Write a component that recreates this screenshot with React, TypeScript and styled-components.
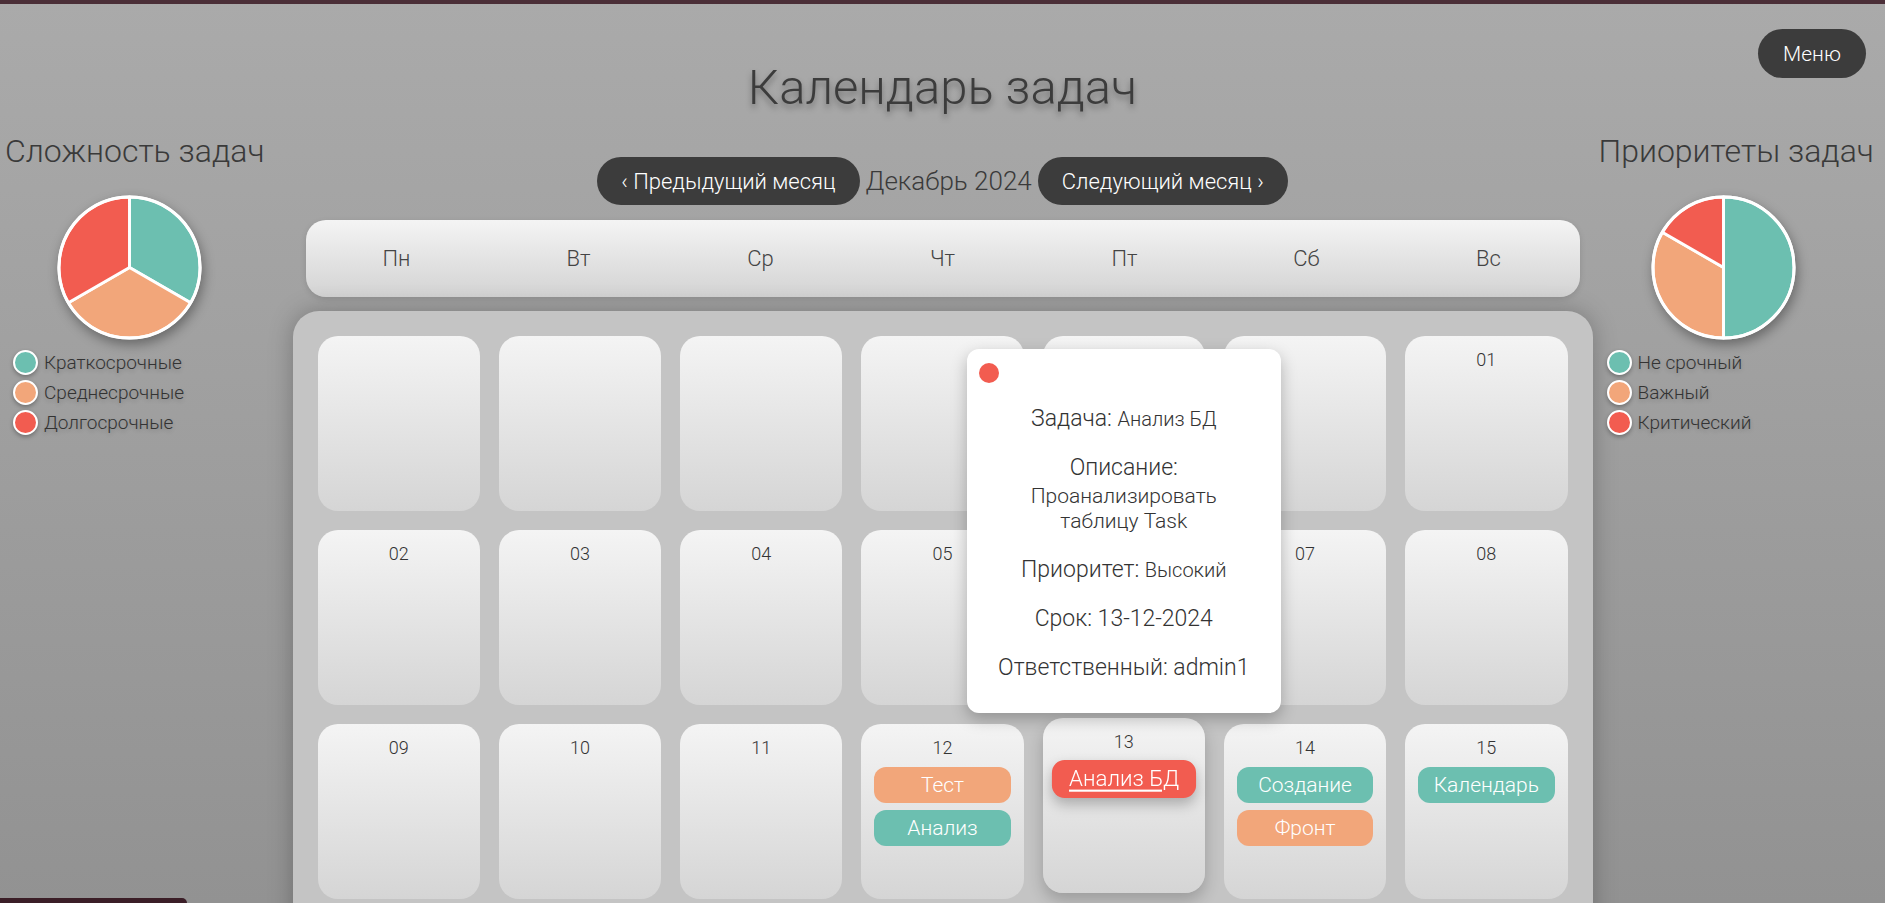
import React from "react";
import styled, { createGlobalStyle, css } from "styled-components";

type Tone = "teal" | "orange" | "red";

const tones: Record<Tone, string> = {
  teal: "#6cbfb0",
  orange: "#f2a67a",
  red: "#f25c50",
};

const GlobalStyle = createGlobalStyle`
  html, body {
    margin: 0;
    padding: 0;
  }
  html {
    scrollbar-width: none;
  }
  html::-webkit-scrollbar,
  body::-webkit-scrollbar {
    display: none;
  }
  body {
    font-family: "Roboto", "Noto Sans", sans-serif;
    font-weight: 300;
    color: #333;
    min-height: 100vh;
    overflow-x: hidden;
    background: linear-gradient(180deg, #aaaaaa 0%, #929292 100%) fixed;
  }
`;

const Page = styled.div`
  border-top: 4px solid #4b2f38;
  display: grid;
  grid-template-columns: 1fr 1300px 1fr;
  grid-template-areas:
    "head head head"
    "left main right";
  align-items: start;
`;

const Header = styled.header`
  grid-area: head;
  display: grid;
  grid-template-columns: 1fr auto 1fr;
  align-items: start;
`;

const Title = styled.h1`
  grid-column: 2;
  margin: 57px 0 0;
  font-size: 49px;
  line-height: 53px;
  font-weight: 300;
  color: #3c3c3c;
  text-shadow: 0 4px 6px rgba(0, 0, 0, 0.35);
`;

const MenuButton = styled.button`
  grid-column: 3;
  justify-self: end;
  margin: 25px 19px 0 0;
  height: 49px;
  padding: 0 25px;
  border: none;
  border-radius: 25px;
  background: #3c3c3c;
  color: #fff;
  font-family: inherit;
  font-weight: 300;
  font-size: 21px;
`;

const Sidebar = styled.aside<{ $area: string }>`
  grid-area: ${({ $area }) => $area};
  padding: 19px 0 0 ${({ $area }) => ($area === "left" ? "5px" : "6px")};
`;

const SidebarTitle = styled.h2`
  margin: 0;
  font-size: 32px;
  line-height: 37px;
  font-weight: 300;
  color: #3a3a3a;
  white-space: nowrap;
`;

const PieBox = styled.div`
  margin: 24px 0 0 51px;
  width: 147px;
  height: 147px;
  filter: drop-shadow(2px 5px 6px rgba(0, 0, 0, 0.35));
`;

const Legend = styled.ul`
  list-style: none;
  margin: 8px 0 0;
  padding: 0 0 0 8px;
  display: flex;
  flex-direction: column;
  gap: 4px;
`;

const LegendItem = styled.li`
  display: flex;
  align-items: center;
  gap: 6px;
  height: 26px;
  font-size: 19px;
  color: #333;
  text-shadow: 0 2px 4px rgba(0, 0, 0, 0.2);
`;

const Dot = styled.span<{ $tone: Tone }>`
  width: 25px;
  height: 25px;
  box-sizing: border-box;
  border-radius: 50%;
  border: 2.5px solid #fff;
  background: ${({ $tone }) => tones[$tone]};
  box-shadow: 0 2px 4px rgba(0, 0, 0, 0.3);
`;

const Main = styled.main`
  grid-area: main;
  padding-top: 43px;
`;

const Nav = styled.div`
  display: flex;
  justify-content: center;
  align-items: center;
  gap: 6px;
`;

const NavButton = styled.button`
  height: 48px;
  padding: 0 24px;
  border: none;
  border-radius: 24px;
  background: #3c3c3c;
  color: #fff;
  font-family: inherit;
  font-weight: 300;
  font-size: 22px;
`;

const MonthLabel = styled.span`
  font-size: 26px;
  color: #3a3a3a;
`;

const WeekHeader = styled.div`
  margin: 15px 13px 0;
  height: 77px;
  border-radius: 20px;
  background: linear-gradient(180deg, #f4f4f4 0%, #d3d3d3 100%);
  box-shadow: 0 2px 6px rgba(0, 0, 0, 0.12);
  display: grid;
  grid-template-columns: repeat(7, 1fr);
  align-items: center;
  justify-items: center;
  font-size: 22px;
  color: #444;
`;

const Board = styled.div`
  margin-top: 14px;
  padding: 25px;
  border-radius: 26px;
  background: #c4c4c4;
  box-shadow: 0 0 24px rgba(0, 0, 0, 0.25);
  display: grid;
  grid-template-columns: repeat(7, 1fr);
  grid-auto-rows: 175px;
  gap: 19px;
`;

const DayCell = styled.div<{ $active?: boolean }>`
  position: relative;
  box-sizing: border-box;
  padding: 13px;
  border-radius: 20px;
  background: linear-gradient(180deg, #f4f4f4 0%, #d5d5d5 100%);
  display: flex;
  flex-direction: column;
  gap: 7px;
  ${({ $active }) =>
    $active &&
    css`
      transform: translateY(-6px);
      box-shadow: 0 8px 16px rgba(0, 0, 0, 0.2);
      z-index: 5;
    `}
`;

const DayNumber = styled.div`
  font-size: 18px;
  line-height: 22px;
  text-align: center;
  color: #333;
  margin-bottom: 1px;
`;

const Chip = styled.div<{ $tone: Tone; $active?: boolean }>`
  height: 36px;
  border-radius: 12px;
  background: ${({ $tone }) => tones[$tone]};
  color: #fff;
  font-size: 21px;
  line-height: 36px;
  text-align: center;
  white-space: nowrap;
  ${({ $active }) =>
    $active &&
    css`
      transform: scale(1.06);
      text-decoration: underline;
      text-underline-offset: 3px;
      box-shadow: 0 6px 12px rgba(0, 0, 0, 0.25);
    `}
`;

const Popup = styled.div`
  position: absolute;
  bottom: calc(100% + 5px);
  left: 50%;
  transform: translateX(-50%);
  width: 314px;
  box-sizing: border-box;
  padding: 14px 12px 32px;
  border-radius: 12px;
  background: #fff;
  box-shadow: 0 6px 16px rgba(0, 0, 0, 0.25);
  display: flex;
  flex-direction: column;
  align-items: center;
  text-align: center;
`;

const PopupDot = styled.span`
  align-self: flex-start;
  width: 20px;
  height: 20px;
  border-radius: 50%;
  background: ${tones.red};
`;

const Field = styled.div`
  margin-top: 23px;
  font-size: 23px;
  line-height: 26px;
  color: #333;
`;

const Value = styled.span`
  font-size: 20px;
`;

const Desc = styled.span`
  display: block;
  max-width: 200px;
  margin: 3px auto 0;
  font-size: 21px;
  line-height: 25px;
`;

const FooterTab = styled.div`
  position: fixed;
  left: 0;
  bottom: 0;
  width: 187px;
  height: 5px;
  border-radius: 0 6px 0 0;
  background: #3b1e27;
`;

type Slice = { tone: Tone; value: number };

const Pie = ({ slices }: { slices: Slice[] }) => {
  const c = 75;
  const r = 72;
  const total = slices.reduce((s, x) => s + x.value, 0);
  let start = 0;
  const pt = (a: number) =>
    `${c + r * Math.sin(a)} ${c - r * Math.cos(a)}`;
  return (
    <svg width="147" height="147" viewBox="0 0 150 150">
      {slices.map((s, i) => {
        const a0 = (start / total) * Math.PI * 2;
        start += s.value;
        const a1 = (start / total) * Math.PI * 2;
        const large = a1 - a0 > Math.PI ? 1 : 0;
        return (
          <path
            key={i}
            d={`M ${c} ${c} L ${pt(a0)} A ${r} ${r} 0 ${large} 1 ${pt(a1)} Z`}
            fill={tones[s.tone]}
            stroke="#fff"
            strokeWidth="3"
            strokeLinejoin="round"
          />
        );
      })}
      <circle cx={c} cy={c} r={r} fill="none" stroke="#fff" strokeWidth="3" />
    </svg>
  );
};

type Task = { title: string; tone: Tone; active?: boolean };

const tasks: Record<number, Task[]> = {
  12: [
    { title: "Тест", tone: "orange" },
    { title: "Анализ", tone: "teal" },
  ],
  13: [{ title: "Анализ БД", tone: "red", active: true }],
  14: [
    { title: "Создание", tone: "teal" },
    { title: "Фронт", tone: "orange" },
  ],
  15: [{ title: "Календарь", tone: "teal" }],
};

const weekDays = ["Пн", "Вт", "Ср", "Чт", "Пт", "Сб", "Вс"];

// December 2024 starts on Sunday
const days: (number | null)[] = [
  ...Array(6).fill(null),
  ...Array.from({ length: 31 }, (_, i) => i + 1),
];

const pad = (n: number) => (n < 10 ? `0${n}` : `${n}`);

const TaskPopup = () => (
  <Popup>
    <PopupDot />
    <Field>
      Задача: <Value>Анализ БД</Value>
    </Field>
    <Field>
      Описание:
      <Desc>Проанализировать таблицу Task</Desc>
    </Field>
    <Field>
      Приоритет: <Value>Высокий</Value>
    </Field>
    <Field>Срок: 13-12-2024</Field>
    <Field>Ответственный: admin1</Field>
  </Popup>
);

export default function App() {
  return (
    <>
      <GlobalStyle />
      <Page>
        <Header>
          <Title>Календарь задач</Title>
          <MenuButton>Меню</MenuButton>
        </Header>

        <Sidebar $area="left">
          <SidebarTitle>Сложность задач</SidebarTitle>
          <PieBox>
            <Pie
              slices={[
                { tone: "teal", value: 1 },
                { tone: "orange", value: 1 },
                { tone: "red", value: 1 },
              ]}
            />
          </PieBox>
          <Legend>
            <LegendItem>
              <Dot $tone="teal" />
              Краткосрочные
            </LegendItem>
            <LegendItem>
              <Dot $tone="orange" />
              Среднесрочные
            </LegendItem>
            <LegendItem>
              <Dot $tone="red" />
              Долгосрочные
            </LegendItem>
          </Legend>
        </Sidebar>

        <Main>
          <Nav>
            <NavButton>‹ Предыдущий месяц</NavButton>
            <MonthLabel>Декабрь 2024</MonthLabel>
            <NavButton>Следующий месяц ›</NavButton>
          </Nav>

          <WeekHeader>
            {weekDays.map((d) => (
              <span key={d}>{d}</span>
            ))}
          </WeekHeader>

          <Board>
            {days.map((day, i) => {
              const list = day ? tasks[day] ?? [] : [];
              const active = list.some((t) => t.active);
              return (
                <DayCell key={i} $active={active}>
                  {day && <DayNumber>{pad(day)}</DayNumber>}
                  {list.map((t) => (
                    <Chip key={t.title} $tone={t.tone} $active={t.active}>
                      {t.title}
                    </Chip>
                  ))}
                  {active && <TaskPopup />}
                </DayCell>
              );
            })}
          </Board>
        </Main>

        <Sidebar $area="right">
          <SidebarTitle>Приоритеты задач</SidebarTitle>
          <PieBox>
            <Pie
              slices={[
                { tone: "teal", value: 3 },
                { tone: "orange", value: 2 },
                { tone: "red", value: 1 },
              ]}
            />
          </PieBox>
          <Legend>
            <LegendItem>
              <Dot $tone="teal" />
              Не срочный
            </LegendItem>
            <LegendItem>
              <Dot $tone="orange" />
              Важный
            </LegendItem>
            <LegendItem>
              <Dot $tone="red" />
              Критический
            </LegendItem>
          </Legend>
        </Sidebar>
      </Page>
      <FooterTab />
    </>
  );
}
